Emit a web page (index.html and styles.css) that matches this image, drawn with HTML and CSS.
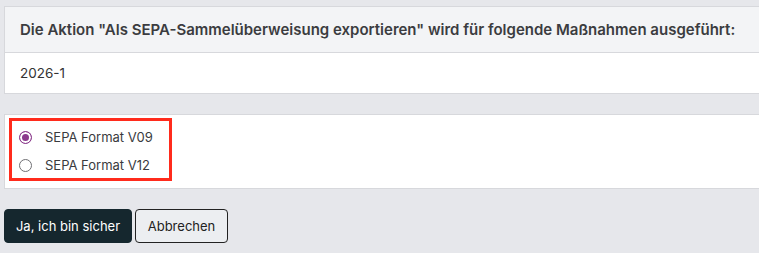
FILE: index.html
```html
<!DOCTYPE html>
<html lang="de">
<head>
<meta charset="utf-8">
<link rel="stylesheet" href="styles.css">
</head>
<body>
<div class="page">
  <div class="card">
    <div class="card-header">Die Aktion "Als SEPA-Sammelüberweisung exportieren" wird für folgende Maßnahmen ausgeführt:</div>
    <div class="card-body">2026-1</div>
  </div>
  <div class="card card-options">
    <div class="highlight">
      <label class="option"><input type="radio" name="fmt" class="radio" checked><span>SEPA Format V09</span></label>
      <label class="option"><input type="radio" name="fmt" class="radio"><span>SEPA Format V12</span></label>
    </div>
  </div>
  <div class="actions">
    <button class="btn btn-primary">Ja, ich bin sicher</button>
    <button class="btn btn-secondary">Abbrechen</button>
  </div>
</div>
</body>
</html>
```
FILE: styles.css
```css
html, body {
  margin: 0;
  padding: 0;
  background: #e6e7eb;
  overflow: hidden;
}
.page {
  padding: 6px 0 0 4px;
  font-family: Inter, "Noto Sans", "Liberation Sans", sans-serif;
  color: #333538;
}
.card {
  width: 770px;
  border: 1px solid #d7d8dc;
  background: #ffffff;
}
.card-header {
  background: #f3f4f6;
  height: 45px;
  line-height: 45px;
  padding: 0 15px;
  border-bottom: 1px solid #d7d8dc;
  font-size: 15px;
  font-weight: 600;
  color: #3b3c40;
  white-space: nowrap;
}
.card-body {
  height: 40px;
  line-height: 40px;
  padding: 0 15px;
  font-size: 13.5px;
  color: #333;
}
.card-options {
  margin-top: 20px;
  padding: 3px 4px;
  box-sizing: border-box;
  height: 75px;
}
.highlight {
  width: 163px;
  height: 63px;
  box-sizing: border-box;
  border: 3px solid #ff2b1c;
  padding: 3px 0 0 7px;
  display: flex;
  flex-direction: column;
  gap: 2px;
}
.option {
  display: flex;
  align-items: center;
  gap: 13px;
  height: 26px;
  font-size: 13px;
  color: #3a3b3e;
}
.radio {
  appearance: none;
  -webkit-appearance: none;
  margin: 0;
  width: 13px;
  height: 13px;
  border: 1px solid #6f6f73;
  border-radius: 50%;
  background: #fff;
  box-sizing: border-box;
}
.radio:checked {
  border-color: #8b3a8c;
  background: #8b3a8c;
  box-shadow: inset 0 0 0 2px #fff;
}
.actions {
  margin-top: 20px;
  display: flex;
  gap: 3px;
}
.btn {
  height: 34px;
  border-radius: 4px;
  font-family: Inter, "Noto Sans", "Liberation Sans", sans-serif;
  font-size: 13px;
  padding: 0;
  white-space: nowrap;
  cursor: pointer;
}
.btn-primary {
  width: 128px;
  background: #15272e;
  color: #ffffff;
  border: 1px solid #15272e;
}
.btn-secondary {
  width: 93px;
  background: #eceef1;
  color: #222;
  border: 1px solid #222;
}
```
